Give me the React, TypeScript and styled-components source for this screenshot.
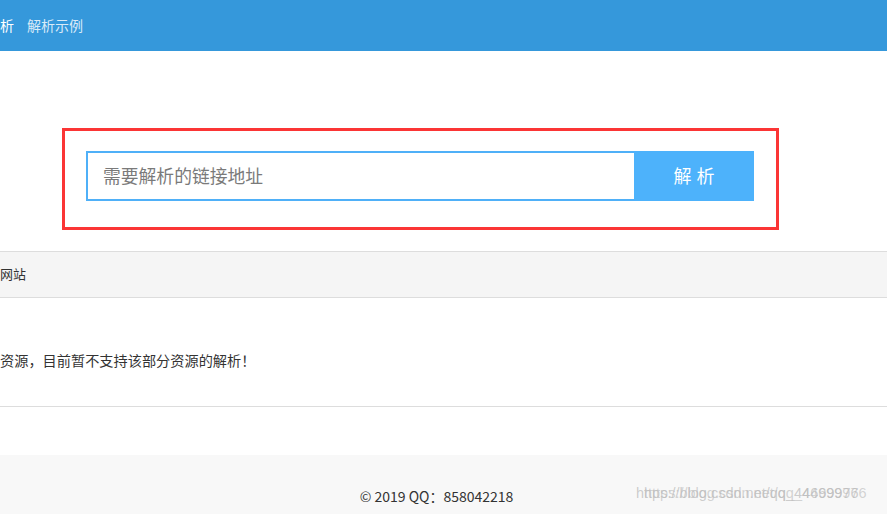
import React from "react"
import styled, { createGlobalStyle } from "styled-components"

const GlobalStyle = createGlobalStyle`
  html, body {
    margin: 0;
    padding: 0;
    background: #fff;
    font-family: "Noto Sans CJK SC", "Noto Sans", sans-serif;
    color: #333;
    overflow: hidden;
  }
`

const Page = styled.div`
  position: relative;
  width: 887px;
  height: 514px;
  overflow: hidden;
`

const NavBar = styled.header`
  height: 51px;
  background: #3598db;
  display: flex;
  align-items: center;
  gap: 13px;
  padding-bottom: 2px;
  box-sizing: border-box;
`

const NavItem = styled.a<{ $active?: boolean }>`
  font-size: 14px;
  color: ${(p) => (p.$active ? "#fff" : "rgba(255,255,255,0.82)")};
  text-decoration: none;
  line-height: 1;
`

const SearchSection = styled.section`
  padding: 77px 0 0 62px;
`

const SearchFrame = styled.div`
  width: 717px;
  height: 102px;
  box-sizing: border-box;
  border: 3px solid #fb3535;
  padding: 20px 22px 0 21px;
`

const SearchRow = styled.form`
  display: flex;
  height: 50px;
`

const UrlInput = styled.input`
  flex: 1;
  box-sizing: border-box;
  height: 50px;
  border: 2px solid #4fb0f8;
  border-right: none;
  padding: 0 0 2px 15px;
  font-family: inherit;
  font-size: 17.8px;
  color: #333;
  outline: none;
  &::placeholder {
    color: #7a7a7a;
  }
`

const SubmitButton = styled.button`
  width: 120px;
  height: 50px;
  border: none;
  background: #4db2fb;
  color: #fff;
  font-family: inherit;
  font-size: 18px;
  letter-spacing: 5px;
  padding: 0 0 2px 5px;
  cursor: pointer;
`

const Panel = styled.section`
  margin-top: 21px;
  border-top: 1px solid #ddd;
  border-bottom: 1px solid #ddd;
`

const PanelHeading = styled.div`
  height: 46px;
  background: #f5f5f5;
  border-bottom: 1px solid #ddd;
  display: flex;
  align-items: center;
  font-size: 13px;
  color: #333;
  padding-bottom: 2px;
  box-sizing: border-box;
`

const PanelBody = styled.div`
  height: 108px;
  display: flex;
  align-items: center;
  font-size: 14.2px;
  color: #333;
  padding-top: 16px;
  box-sizing: border-box;
`

const Footer = styled.footer`
  margin-top: 48px;
  height: 60px;
  background: #f8f8f8;
  display: flex;
  justify-content: center;
  align-items: center;
  padding: 22px 14px 0 0;
  box-sizing: border-box;
  font-size: 14px;
  color: #333;
`

const Watermark = styled.div`
  position: absolute;
  left: 636px;
  top: 485px;
  font-family: "Liberation Sans", sans-serif;
  font-size: 14.5px;
  color: rgba(185, 185, 185, 0.7);
  text-shadow: 8px 0 rgba(185, 185, 185, 0.6);
  white-space: nowrap;
  pointer-events: none;
`

export default function App() {
  return (
    <>
      <GlobalStyle />
      <Page>
        <NavBar>
          <NavItem $active>析</NavItem>
          <NavItem>解析示例</NavItem>
        </NavBar>
        <SearchSection>
          <SearchFrame>
            <SearchRow onSubmit={(e) => e.preventDefault()}>
              <UrlInput placeholder="需要解析的链接地址" />
              <SubmitButton type="submit">解析</SubmitButton>
            </SearchRow>
          </SearchFrame>
        </SearchSection>
        <Panel>
          <PanelHeading>网站</PanelHeading>
          <PanelBody>资源，目前暂不支持该部分资源的解析！</PanelBody>
        </Panel>
        <Footer>© 2019 QQ：858042218</Footer>
        <Watermark>https://blog.csdn.net/qq_44699976</Watermark>
      </Page>
    </>
  )
}
